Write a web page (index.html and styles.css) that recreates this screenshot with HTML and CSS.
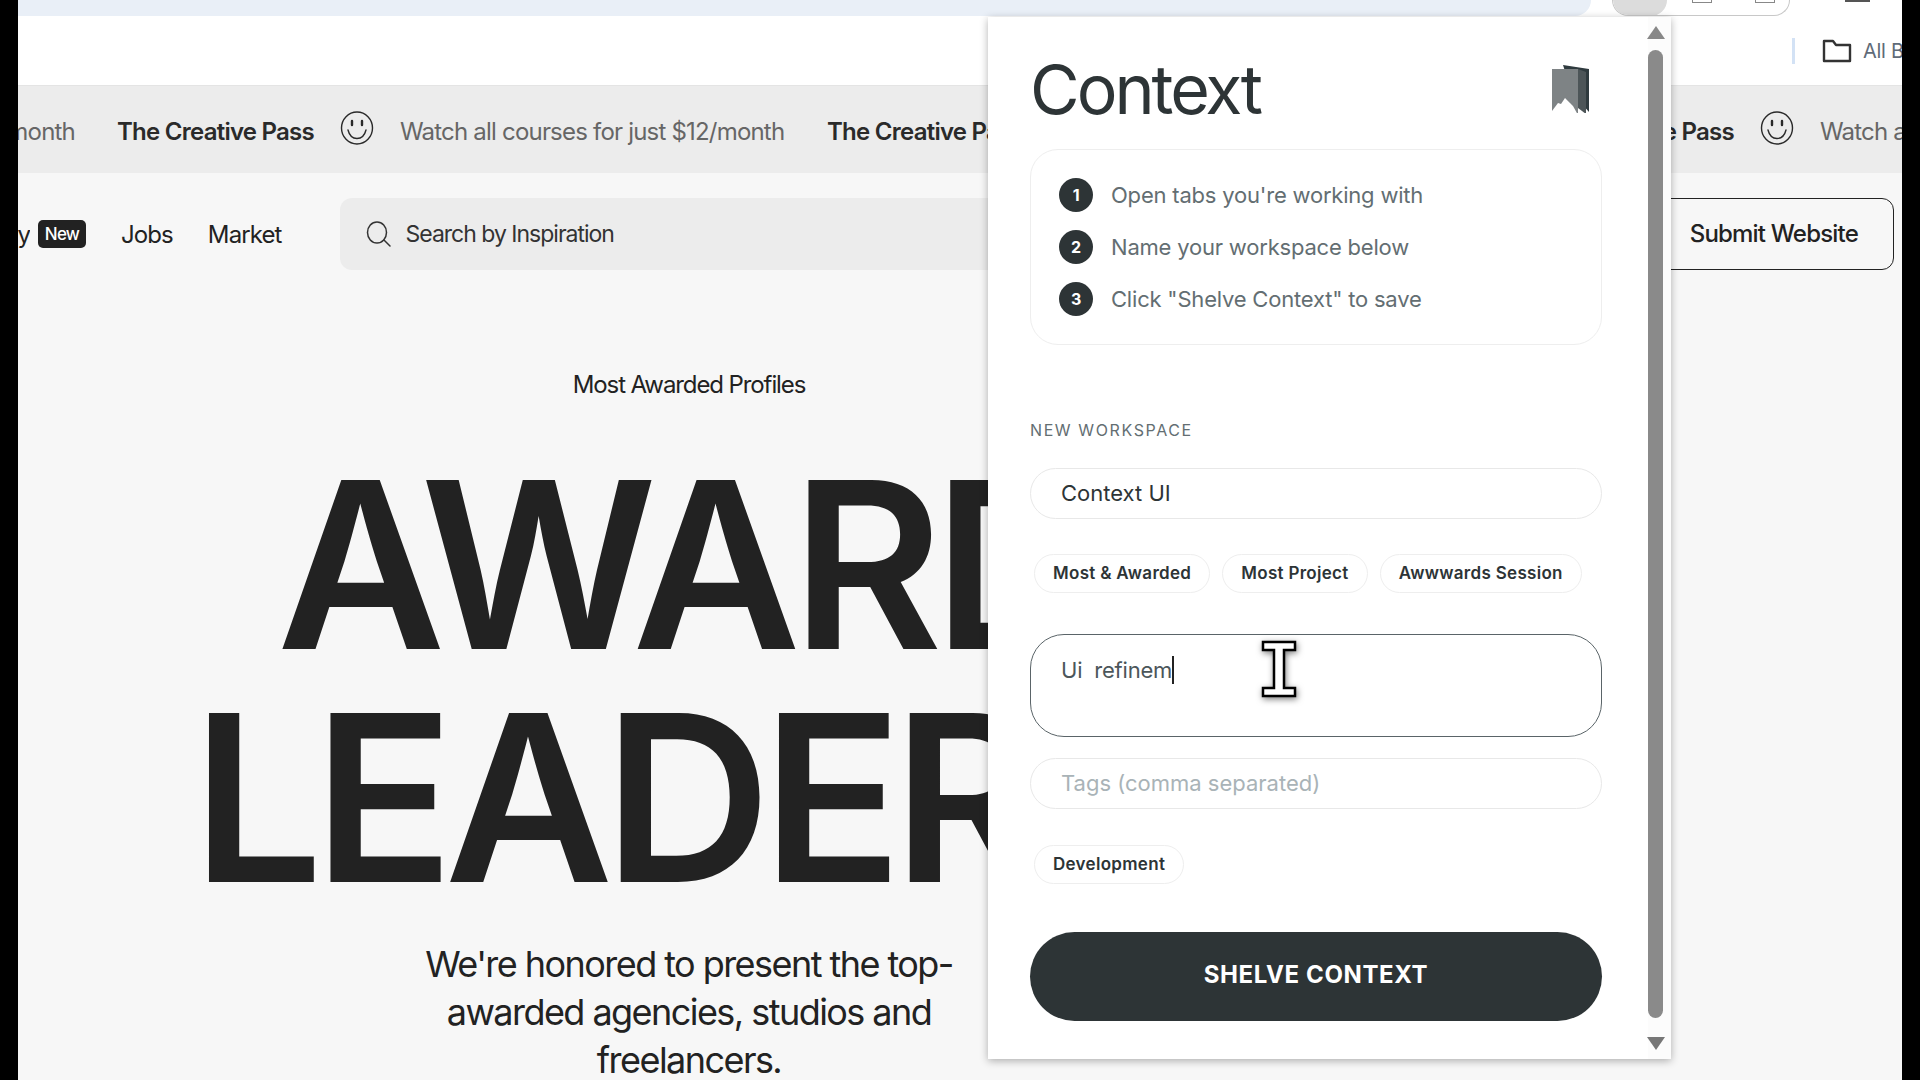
FILE: index.html
```html
<!DOCTYPE html>
<html lang="en">
<head>
    <meta charset="UTF-8">
    <title>Context</title>
    <link rel="stylesheet" href="styles.css">
</head>
<body>
    <div class="page">
        <div class="browser-top">
            <div class="address-bar"></div>
            <div class="profile-pill">
                <span class="profile-circle"></span>
                <span class="pill-icon"></span>
                <span class="pill-icon"></span>
            </div>
            <span class="menu-icon"></span>
        </div>
        <div class="bookmarks">
            <span class="bookmarks-sep"></span>
            <svg class="folder-icon" viewBox="0 0 30 24" fill="none" stroke="#333" stroke-width="2.4" stroke-linejoin="round"><path d="M2 2h9l3 4h14v16H2z"/></svg>
            <span class="bookmarks-label">All Bookmarks</span>
        </div>

        <div class="marquee">
            <div class="marquee-item"><span class="marquee-watch">Watch all courses for just $12/month</span></div>
            <div class="marquee-item">
                <strong>The Creative Pass</strong>
                <svg class="smile" viewBox="0 0 34 34" fill="none" stroke="#2a2a2a" stroke-width="1.4" stroke-linecap="round"><ellipse cx="17" cy="17" rx="15.500" ry="16"/><path d="M8 19c1.500 6 5 8.500 9 8.500s7.500-2.500 9-8.500"/><path d="M12 10v4M22 10v4" stroke-width="2.400"/></svg>
                <span class="marquee-watch">Watch all courses for just $12/month</span>
            </div>
            <div class="marquee-item">
                <strong>The Creative Pass</strong>
                <svg class="smile" viewBox="0 0 34 34" fill="none" stroke="#2a2a2a" stroke-width="1.4" stroke-linecap="round"><ellipse cx="17" cy="17" rx="15.500" ry="16"/><path d="M8 19c1.500 6 5 8.500 9 8.500s7.500-2.500 9-8.500"/><path d="M12 10v4M22 10v4" stroke-width="2.400"/></svg>
                <span class="marquee-watch">Watch all courses for just $12/month</span>
            </div>
            <div class="marquee-item">
                <strong>The Creative Pass</strong>
                <svg class="smile" viewBox="0 0 34 34" fill="none" stroke="#2a2a2a" stroke-width="1.4" stroke-linecap="round"><ellipse cx="17" cy="17" rx="15.500" ry="16"/><path d="M8 19c1.500 6 5 8.500 9 8.500s7.500-2.500 9-8.500"/><path d="M12 10v4M22 10v4" stroke-width="2.400"/></svg>
                <span class="marquee-watch">Watch all courses for just $12/month</span>
            </div>
        </div>

        <nav class="site-nav">
            <div class="nav-cut"><span>Academy</span></div>
            <span class="badge-new">New</span>
            <a class="nav-link" href="#">Jobs</a>
            <a class="nav-link" href="#">Market</a>
            <div class="search">
                <svg class="search-icon" viewBox="0 0 26 26" fill="none" stroke="#333" stroke-width="1.5" stroke-linecap="round"><ellipse cx="11" cy="11.500" rx="9.500" ry="10.500"/><path d="M18 19l6 6"/></svg>
                <span>Search by Inspiration</span>
            </div>
            <a class="submit-btn" href="#">Submit Website</a>
        </nav>

        <section class="hero">
            <p class="hero-label">Most Awarded Profiles</p>
            <h1 class="hero-title">AWARD<br>LEADERS</h1>
            <p class="hero-text">We're honored to present the top-awarded agencies, studios and freelancers.</p>
        </section>
    </div>

    <aside class="popup">
        <div class="popup-body">
            <header class="popup-head">
                <h2>Context</h2>
                <svg class="shelf-icon" viewBox="0 0 40 48"><path d="M12 0l26 4v43l-7-8-5 4z" fill="#2f3a3e"/><path d="M1 4h26v46l-5-9-3-3-5-5-4 6-3-1-6 8z" fill="#7e8385"/><path d="M27 4l8 3v42l-8-6z" fill="#4d5558"/></svg>
            </header>

            <ol class="steps">
                <li><span class="step-num">1</span>Open tabs you're working with</li>
                <li><span class="step-num">2</span>Name your workspace below</li>
                <li><span class="step-num">3</span>Click "Shelve Context" to save</li>
            </ol>

            <div class="section-label">NEW WORKSPACE</div>
            <input class="field" type="text" value="Context UI">

            <div class="chips">
                <span class="chip">Most &amp; Awarded</span>
                <span class="chip">Most Project</span>
                <span class="chip">Awwwards Session</span>
            </div>

            <div class="note">Ui&nbsp; refinem<span class="caret"></span></div>
            <input class="field field-tags" type="text" placeholder="Tags (comma separated)">

            <div class="chips chips-tags">
                <span class="chip">Development</span>
            </div>

            <button class="shelve-btn">SHELVE CONTEXT</button>
        </div>

        <div class="scrollbar">
            <span class="arrow-up"></span>
            <span class="thumb"></span>
            <span class="arrow-down"></span>
        </div>
    </aside>

    <svg class="text-cursor" viewBox="0 0 36 58">
        <path d="M2 2h32v8H23v38h11v8H2v-8h11V10H2z" fill="#fff" stroke="#000" stroke-width="2.500"/>
    </svg>
</body>
</html>
```
FILE: styles.css
```css
* {
    margin: 0;
    padding: 0;
    box-sizing: border-box;
}

html, body {
    height: 1080px;
    overflow: hidden;
}

body {
    background: #000;
    font-family: 'Inter', sans-serif;
    color: #222;
}

.page {
    width: 1884px;
    height: 1080px;
    margin-left: 18px;
    background: #f7f7f7;
    overflow: hidden;
}

/* browser chrome at the top */
.browser-top {
    height: 16px;
    background: #fff;
    display: flex;
}

.address-bar {
    width: 1573px;
    background: #e9eff7;
    border-radius: 0 0 20px 0;
}

.profile-pill {
    width: 178px;
    margin-left: 21px;
    border: 1px solid #c8c8c8;
    border-top: 0;
    border-radius: 0 0 20px 20px;
    display: flex;
    gap: 25px;
    overflow: hidden;
}

.profile-circle {
    width: 54px;
    height: 16px;
    background: #dcdcdc;
    border-radius: 0 0 27px 27px;
}

.pill-icon {
    width: 20px;
    height: 3px;
    border: 1px solid #888;
    border-top: 0;
}

.pill-icon + .pill-icon {
    margin-left: 18px;
}

.menu-icon {
    width: 25px;
    height: 2px;
    margin-left: 55px;
    background: #555;
}

.bookmarks {
    height: 69px;
    background: #fff;
    display: flex;
    align-items: center;
    padding-left: 1774px;
    overflow: hidden;
    white-space: nowrap;
}

.bookmarks-sep {
    width: 3px;
    height: 26px;
    background: #d3e2f5;
    flex-shrink: 0;
}

.folder-icon {
    width: 30px;
    height: 24px;
    margin-left: 27px;
    flex-shrink: 0;
}

.bookmarks-label {
    margin-left: 11px;
    font-size: 20px;
    letter-spacing: -0.3px;
    color: #5f6b78;
}

/* marquee */
.marquee {
    height: 88px;
    padding-top: 3px;
    background: #ececec;
    border-top: 1px solid #e4e4e4;
    display: flex;
    align-items: center;
    white-space: nowrap;
    overflow: hidden;
    margin-left: -611px;
    width: 2495px;
}

.marquee-item {
    width: 710px;
    flex-shrink: 0;
    display: flex;
    align-items: center;
    font-size: 24px;
    letter-spacing: -0.8px;
}

.marquee-item:first-child {
    justify-content: flex-end;
    padding-right: 42px;
}

.marquee-item strong {
    font-weight: 600;
    color: #2a2a2a;
    letter-spacing: -0.75px;
}

.smile {
    width: 34px;
    height: 34px;
    margin: -6px 26px 0 26px;
}

.marquee-watch {
    color: #666;
}

/* site nav */
.site-nav {
    height: 72px;
    margin-top: 25px;
    padding-right: 8px;
    display: flex;
    align-items: center;
}

.nav-cut {
    width: 12px;
    overflow: hidden;
    direction: rtl;
    font-size: 24px;
    letter-spacing: -0.9px;
    white-space: nowrap;
}

.badge-new {
    margin-left: 8px;
    width: 48px;
    height: 28px;
    background: #222;
    color: #fff;
    border-radius: 5px;
    font-size: 17px;
    font-weight: 500;
    letter-spacing: -0.8px;
    display: flex;
    align-items: center;
    justify-content: center;
}

.nav-link {
    color: #222;
    text-decoration: none;
    font-size: 24px;
    letter-spacing: -0.9px;
}

.badge-new + .nav-link {
    margin-left: 35px;
}

.nav-link + .nav-link {
    margin-left: 35px;
}

.search {
    margin-left: 58px;
    flex: 1;
    height: 72px;
    background: #ececec;
    border-radius: 12px;
    display: flex;
    align-items: center;
    padding-left: 26px;
    font-size: 23px;
    letter-spacing: -1px;
    color: #333;
}

.search-icon {
    width: 26px;
    height: 26px;
    margin-right: 14px;
}

.submit-btn {
    width: 260px;
    height: 72px;
    margin-left: 16px;
    padding-bottom: 2px;
    border: 1px solid #222;
    border-radius: 12px;
    color: #222;
    text-decoration: none;
    font-size: 24px;
    font-weight: 500;
    letter-spacing: -0.8px;
    display: flex;
    align-items: center;
    justify-content: flex-end;
    padding-right: 35px;
}

/* hero */
.hero {
    width: 1342px;
    padding-top: 101px;
    text-align: center;
}

.hero-label {
    font-size: 24px;
    line-height: 28px;
    letter-spacing: -1.1px;
}

.hero-title {
    margin: 49px 0 0 -10px;
    font-size: 232px;
    line-height: 233px;
    font-weight: 600;
    letter-spacing: -9.5px;
    color: #222;
}

.hero-text {
    width: 560px;
    margin: 26px auto 0;
    font-size: 36px;
    line-height: 48px;
    letter-spacing: -1.55px;
}

/* popup */
.popup {
    position: absolute;
    left: 988px;
    top: 17px;
    width: 683px;
    height: 1042px;
    background: #fff;
    box-shadow: 0 2px 8px rgba(0, 0, 0, 0.3);
    display: flex;
    color: #2d3436;
}

.popup-body {
    width: 660px;
    padding: 0 46px 0 42px;
}

.popup-head {
    height: 132px;
    padding-top: 12px;
    display: flex;
    align-items: center;
    justify-content: space-between;
    padding-right: 11px;
}

.popup-head h2 {
    font-size: 68px;
    font-weight: 400;
    letter-spacing: -3px;
    line-height: 1;
}

.shelf-icon {
    width: 40px;
    height: 48px;
}

.steps {
    list-style: none;
    height: 196px;
    border: 1px solid #eee;
    border-radius: 28px;
    padding: 20px 28px;
    display: flex;
    flex-direction: column;
    justify-content: center;
    gap: 18px;
    color: #636e72;
    font-size: 22px;
    letter-spacing: -0.2px;
}

.steps li {
    display: flex;
    align-items: center;
    height: 34px;
}

.step-num {
    width: 34px;
    height: 34px;
    border-radius: 50%;
    background: #2d3436;
    color: #fff;
    font-size: 16px;
    font-weight: 700;
    display: flex;
    align-items: center;
    justify-content: center;
    margin-right: 18px;
}

.section-label {
    margin-top: 74px;
    font-size: 16px;
    line-height: 22px;
    letter-spacing: 1.6px;
    color: #636e72;
}

.field {
    display: block;
    width: 100%;
    height: 51px;
    margin-top: 27px;
    padding: 0 30px 2px;
    border: 1px solid #e8e8e8;
    border-radius: 26px;
    font-family: inherit;
    font-size: 22px;
    color: #2d3436;
    background: #fff;
    outline: none;
}

.field::placeholder {
    color: #a9b3b7;
}

.chips {
    display: flex;
    gap: 12px;
    margin: 35px 0 0 4px;
}

.chip {
    height: 39px;
    padding: 0 18px 2px;
    border: 1px solid #eee;
    border-radius: 20px;
    font-size: 17px;
    font-weight: 600;
    letter-spacing: 0.3px;
    display: flex;
    align-items: center;
}

.note {
    height: 103px;
    margin-top: 41px;
    padding: 20px 30px;
    border: 1.5px solid #5a6468;
    border-radius: 34px;
    font-size: 22px;
    line-height: 30px;
    letter-spacing: -0.2px;
    color: #4c565a;
}

.caret {
    display: inline-block;
    width: 2px;
    height: 28px;
    background: #222;
    vertical-align: -6px;
}

.field-tags {
    margin-top: 21px;
}

.chips-tags {
    margin-top: 36px;
}

.shelve-btn {
    display: block;
    width: 100%;
    height: 89px;
    margin-top: 48px;
    padding-bottom: 4px;
    border: 0;
    border-radius: 45px;
    background: #2d3436;
    color: #fff;
    font-family: inherit;
    font-size: 24px;
    font-weight: 700;
    letter-spacing: 0.6px;
}

.scrollbar {
    width: 23px;
    padding: 9px 8px 0 0;
    background: #fcfcfc;
    display: flex;
    flex-direction: column;
    align-items: center;
}

.arrow-up {
    width: 0;
    height: 0;
    border-left: 9px solid transparent;
    border-right: 9px solid transparent;
    border-bottom: 13px solid #888;
}

.thumb {
    flex-shrink: 0;
    width: 15px;
    height: 968px;
    margin-top: 11px;
    background: #8a8a8a;
    border-radius: 8px;
}

.arrow-down {
    width: 0;
    height: 0;
    margin-top: 19px;
    border-left: 9px solid transparent;
    border-right: 9px solid transparent;
    border-top: 13px solid #777;
}

.text-cursor {
    position: absolute;
    left: 1261px;
    top: 640px;
    width: 36px;
    height: 58px;
    filter: drop-shadow(1px 2px 3px rgba(0, 0, 0, 0.5));
}
```
